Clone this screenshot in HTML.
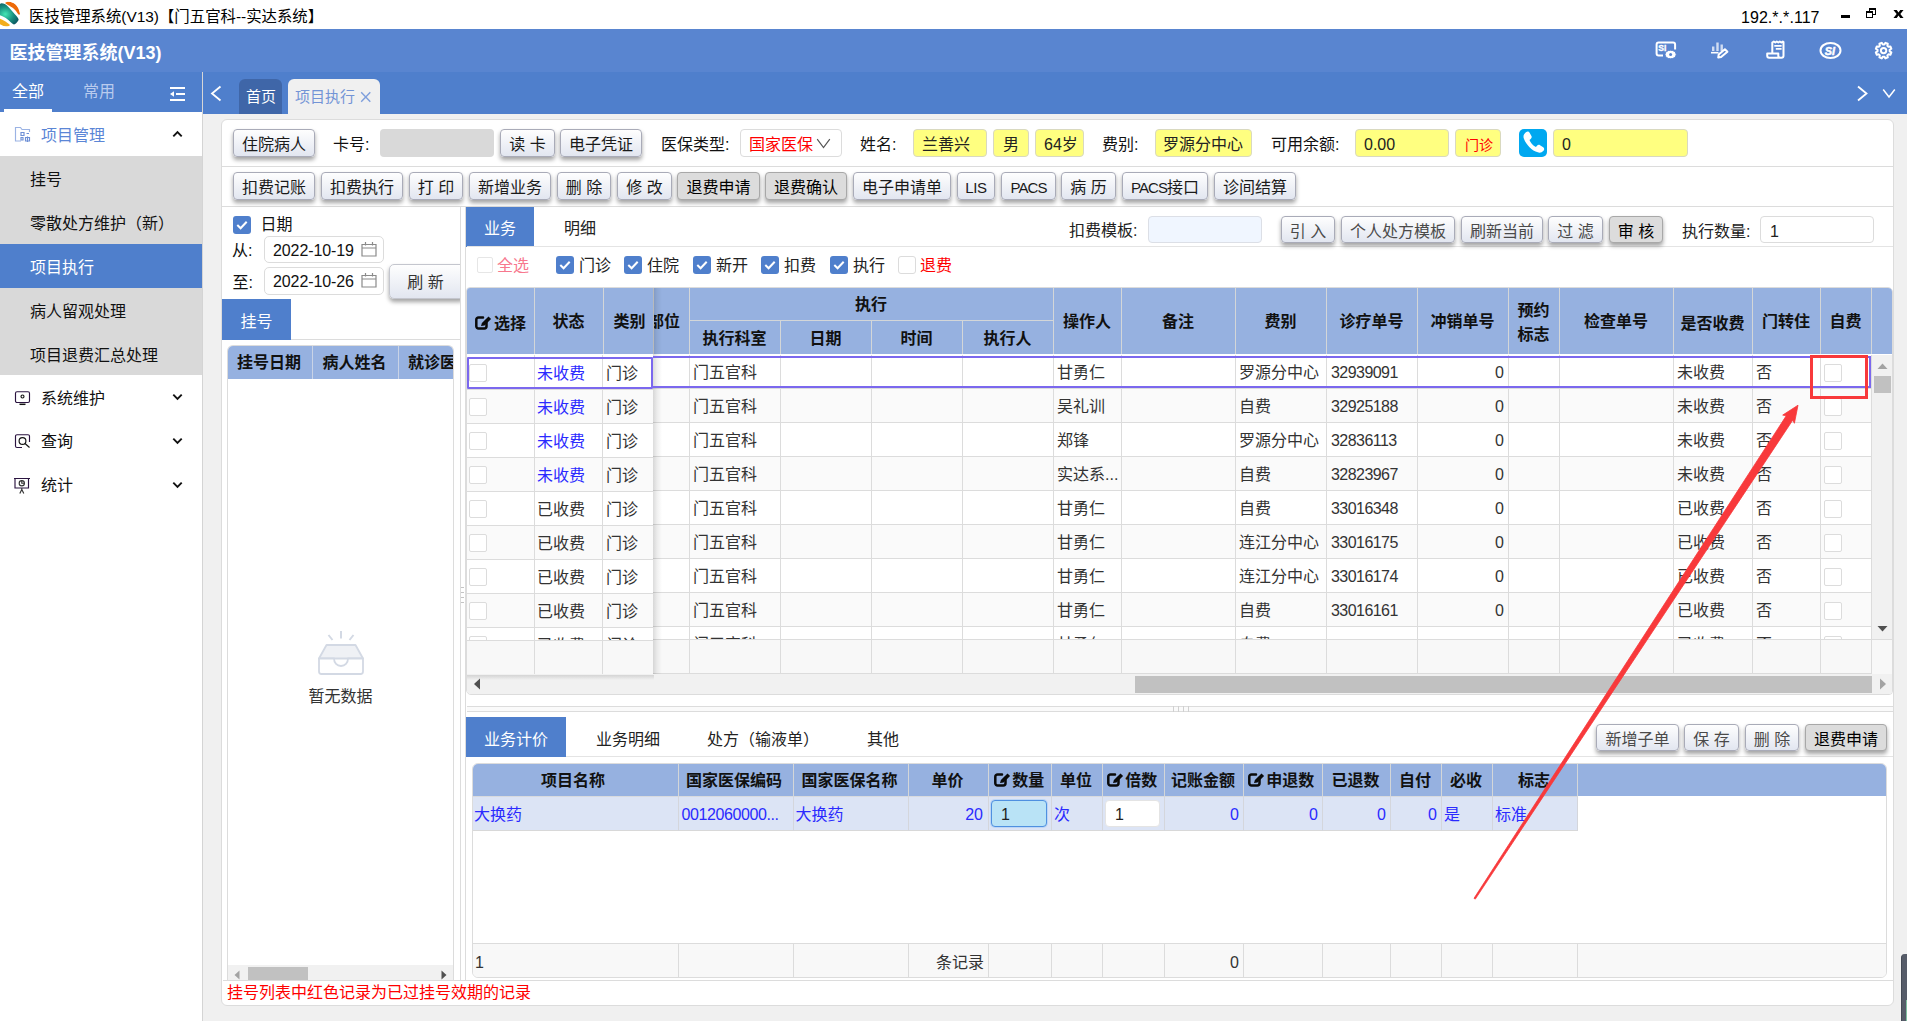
<!DOCTYPE html><html lang="zh-CN"><head><meta charset="utf-8"><title>医技管理系统(V13)</title><style>
*{box-sizing:border-box;margin:0;padding:0}
html,body{width:1907px;height:1021px;overflow:hidden;background:#f0f0f0}
body{position:relative;font-family:"Liberation Sans","Noto Sans CJK SC",sans-serif;font-size:16px;color:#222;-webkit-font-smoothing:antialiased}
div,svg,span.a{position:absolute}
.btn{height:27px;border:1px solid #a9abb8;border-radius:4px;background:linear-gradient(#fefefe,#e2e6f0);box-shadow:0 3px 4px rgba(0,0,0,.36);text-align:center;line-height:27px;color:#1a1a1a;white-space:nowrap}
.btn.g{color:#4a4a4a}
.btn.dis{background:#dcdcdc;border-color:#a8a8a8;color:#000}
.y{height:28px;border:1px solid #d9d9c0;border-radius:4px;background:#ffff80;line-height:29.500px;color:#222;white-space:nowrap}
.cb{width:18px;height:18px;border-radius:3px;background:#4F7FCC}
.cbu{width:18px;height:18px;border-radius:3px;background:#fff;border:1px solid #dcdcdc}
.hl{height:1px;background:#dcdcdc}
.vl{width:1px;background:#dcdcdc}
.th{font-weight:bold;color:#111;text-align:center;white-space:nowrap}
.c{white-space:nowrap;overflow:hidden;color:#333}
.bl{color:#2a2aff}
</style></head><body>
<div style="left:0px;top:0px;width:1907px;height:29px;background:#fff"></div>
<svg style="left:0;top:0" width="24" height="29" viewBox="0 0 24 29">
<defs><radialGradient id="lg" cx="0.45" cy="0.5" r="0.6"><stop offset="0" stop-color="#45e6b4"/><stop offset="0.55" stop-color="#189080"/><stop offset="1" stop-color="#0b5560"/></radialGradient>
<clipPath id="lc"><circle cx="7.5" cy="14" r="12.6"/></clipPath></defs>
<g clip-path="url(#lc)">
<rect x="-6" y="0" width="30" height="29" fill="#fff"/>
<path d="M-6 8 C2 -2 8 6 12 11 C16 16 20 18 19 24 C14 28 10 20 4 17 C0 15 -4 14 -6 12Z" fill="url(#lg)"/>
<path d="M5 3 C9 0 18 2 20 14 C19 16 18 14 16 11 C13 7 9 6 5 3Z" fill="#ee6a08"/>
<path d="M-6 17 C0 18 6 21 10 25 C8 28 0 27 -6 22Z" fill="#f2ad1c"/>
</g></svg>
<div style="left:29px;top:5px;height:24px;line-height:24px;white-space:nowrap;font-size:15.400px;color:#000">医技管理系统(V13)【门五官科--实达系统】</div>
<div style="left:1741px;top:5.5px;height:24px;line-height:24px;white-space:nowrap;color:#000;letter-spacing:0.05px">192.*.*.117</div>
<div style="left:1841px;top:15px;width:9px;height:3px;background:#000"></div>
<div style="left:1869px;top:8px;width:7px;height:7px;border:1px solid #000;border-top-width:2px;background:#fff"></div>
<div style="left:1866px;top:11px;width:7px;height:7px;border:1px solid #000;border-top-width:2px;background:#fff"></div>
<svg style="left:1893px;top:10px" width="11" height="8" viewBox="0 0 10.1 8"><path d="M0 0H3.300L5.050 2.500L6.800 0H10.100L6.900 4L10.100 8H6.800L5.050 5.500L3.300 8H0L3.200 4Z" fill="#000"/></svg>
<div style="left:0px;top:29px;width:1907px;height:43px;background:#5985D0"></div>
<div style="left:9.5px;top:39.8px;height:26px;line-height:26px;white-space:nowrap;font-size:18px;font-weight:bold;color:#fff">医技管理系统(V13)</div>
<svg style="left:1640px;top:34px" width="267" height="34" viewBox="1640 34 267 34">
<path d="M1663 55.400H1658.600a2 2 0 0 1-2-2V44.500a2 2 0 0 1 2-2H1673.100a2 2 0 0 1 2 2V49.500" stroke="#fff" fill="none" stroke-width="2" stroke-linejoin="round"/>
<text x="1658.200" y="51.300" font-size="8.600" font-weight="bold" stroke="#fff" stroke-width="0.300" fill="#fff" font-family='"Liberation Sans","Noto Sans CJK SC",sans-serif'>SI</text>
<ellipse cx="1670.600" cy="54.500" rx="5.600" ry="4.300" fill="#fff" stroke="#5985D0" stroke-width="1"/>
<circle cx="1670.600" cy="54.600" r="1.500" fill="#5985D0"/>
<path d="M1713.200 46.500v4.500M1717.500 42.500v8.500M1721.700 44.500v6.500" stroke="#fff" stroke-width="2.400" fill="none" opacity=".72"/>
<path d="M1711 52.700h7.500" stroke="#fff" stroke-width="1.600" fill="none"/>
<path d="M1724.900 49.200l2.500 2.500-6.300 5.300-2.900.600.500-3z" stroke="#fff" fill="none" stroke-width="2" stroke-linejoin="round" stroke-width="1.800"/>
<path d="M1772.300 53.200V42.500l1.500-1 1.500 1 1.500-1 1.500 1 1.500-1 1.500 1 1.500-1 .700.500V55.800a2 2 0 0 1-2 2H1769.200a2 2 0 0 1-2-2V53.500H1778.300V55.800a2 2 0 0 0 2 2" stroke="#fff" fill="none" stroke-width="2" stroke-linejoin="round"/>
<path d="M1774.300 45.800h7.300M1775.800 48.800h5.800" stroke="#fff" stroke-width="1.800" fill="none"/>
<ellipse cx="1830.500" cy="50.500" rx="10" ry="7.600" stroke="#fff" fill="none" stroke-width="2" stroke-linejoin="round"/>
<text x="1824.800" y="54.700" font-size="10.800" font-weight="bold" font-style="italic" stroke="#fff" stroke-width="0.500" fill="#fff" font-family='"Liberation Sans","Noto Sans CJK SC",sans-serif'>SI</text>
<path d="M1889.65 51.35 L1891.38 52.44 L1890.41 54.80 L1888.41 54.35 L1887.35 55.41 L1887.80 57.41 L1885.44 58.38 L1884.35 56.65 L1882.85 56.65 L1881.76 58.38 L1879.40 57.41 L1879.85 55.41 L1878.79 54.35 L1876.79 54.80 L1875.82 52.44 L1877.55 51.35 L1877.55 49.85 L1875.82 48.76 L1876.79 46.40 L1878.79 46.85 L1879.85 45.79 L1879.40 43.79 L1881.76 42.82 L1882.85 44.55 L1884.35 44.55 L1885.44 42.82 L1887.80 43.79 L1887.35 45.79 L1888.41 46.85 L1890.41 46.40 L1891.38 48.76 L1889.65 49.85Z" stroke="#fff" fill="none" stroke-width="2" stroke-linejoin="round"/><circle cx="1883.600" cy="50.600" r="2.700" stroke="#fff" fill="none" stroke-width="2" stroke-linejoin="round"/>
</svg>
<div style="left:0px;top:72px;width:203px;height:40px;background:#4F7FCC"></div>
<div style="left:203px;top:72px;width:1704px;height:42px;background:#4F7FCC"></div>
<div style="left:202px;top:72px;width:1px;height:949px;background:#d4d4d4"></div>
<div style="left:202px;top:72px;width:1px;height:42px;background:#d6d6d6"></div>
<div style="left:12px;top:79.7px;height:24px;line-height:24px;white-space:nowrap;color:#fff">全部</div>
<div style="left:83px;top:79.7px;height:24px;line-height:24px;white-space:nowrap;color:#b9cbee">常用</div>
<div style="left:4px;top:109px;width:48px;height:3px;background:#fff"></div>
<svg style="left:169px;top:86px" width="17" height="16" viewBox="0 0 17 16"><path d="M1 2h15M7 8h9M1 14h15" stroke="#fff" stroke-width="1.800" fill="none"/><path d="M1 8l4-2.800v5.600z" fill="#fff"/></svg>
<svg style="left:209px;top:84.500px" width="13" height="17" viewBox="0 0 13 17"><path d="M11.500 1.500L3 8.500L11.500 15.500" stroke="#fff" stroke-width="1.800" fill="none"/></svg>
<div style="left:239px;top:79px;width:43px;height:35px;background:#3f66a8;border-radius:6px 6px 0 0"></div>
<div style="left:246px;top:85px;height:24px;line-height:24px;white-space:nowrap;color:#fff;font-size:15px">首页</div>
<div style="left:288px;top:79px;width:92px;height:35px;background:#f0f0f0;border-radius:6px 6px 0 0"></div>
<div style="left:295px;top:85px;height:24px;line-height:24px;white-space:nowrap;color:#7394d6;font-size:15px">项目执行</div>
<svg style="left:360px;top:91px" width="12" height="12" viewBox="0 0 12 12"><path d="M1.200 1.200L10.300 10.800M10.300 1.200L1.200 10.800" stroke="#7f9fdc" stroke-width="1.400" fill="none"/></svg>
<svg style="left:1856px;top:84.500px" width="13" height="17" viewBox="0 0 13 17"><path d="M2 1.500L10.500 8.500L2 15.500" stroke="#fff" stroke-width="1.800" fill="none"/></svg>
<svg style="left:1882px;top:88px" width="14" height="11" viewBox="0 0 14 11"><path d="M1.200 1.500L7 9L12.800 1.500" stroke="#fff" stroke-width="1.500" fill="none"/></svg>
<div style="left:0px;top:112px;width:202px;height:909px;background:#fff"></div>
<div style="left:0px;top:156px;width:202px;height:219px;background:#d9d9d9"></div>
<div style="left:0px;top:244px;width:202px;height:44px;background:#4F7FCC"></div>
<svg style="left:14px;top:126px" width="18" height="17" viewBox="0 0 18 17"><path d="M15.500 6V3.500H8L6.500 1.500H1.500V15H7" stroke="#9bb3e4" stroke-width="1.150" fill="none"/><path d="M7 6.500h3v3H7zM12.500 7.500h2.500M7 11.500h2v2.500H7zM11.500 11.500h4v3.500h-4zM13.500 10.500v5.500" stroke="#6e90d6" stroke-width="1.150" fill="none"/></svg>
<div style="left:41px;top:124px;height:24px;line-height:24px;white-space:nowrap;color:#5b86d6">项目管理</div>
<svg style="left:172px;top:130px" width="11" height="8" viewBox="0 0 11 8"><path d="M1.300 6.300L5.500 2L9.700 6.300" stroke="#111" stroke-width="1.900" fill="none"/></svg>
<div style="left:30px;top:168px;height:24px;line-height:24px;white-space:nowrap;color:#111">挂号</div>
<div style="left:30px;top:212px;height:24px;line-height:24px;white-space:nowrap;color:#111">零散处方维护（新）</div>
<div style="left:30px;top:256px;height:24px;line-height:24px;white-space:nowrap;color:#fff">项目执行</div>
<div style="left:30px;top:300px;height:24px;line-height:24px;white-space:nowrap;color:#111">病人留观处理</div>
<div style="left:30px;top:343.5px;height:24px;line-height:24px;white-space:nowrap;color:#111">项目退费汇总处理</div>
<svg style="left:14px;top:390px" width="18" height="17" viewBox="0 0 18 17"><rect x="1.500" y="1.700" width="14" height="10.800" rx="1.500" stroke="#2b1440" stroke-width="1.150" fill="none"/><circle cx="8.500" cy="6.500" r="1.500" stroke="#111" stroke-width="1.150" fill="none"/><path d="M5.500 14.300h6" stroke="#111" stroke-width="1.500"/></svg>
<div style="left:41px;top:387px;height:24px;line-height:24px;white-space:nowrap;color:#111">系统维护</div>
<svg style="left:14px;top:433px" width="18" height="17" viewBox="0 0 18 17"><path d="M15.500 9V3.200a1.500 1.500 0 0 0-1.500-1.500H3a1.500 1.500 0 0 0-1.500 1.500V13a1.500 1.500 0 0 0 1.500 1.500h5" stroke="#2b1440" stroke-width="1.150" fill="none"/><circle cx="8.500" cy="8" r="3.400" stroke="#111" stroke-width="1.150" fill="none"/><path d="M11 10.500l4.500 4" stroke="#111" stroke-width="1.150" fill="none"/></svg>
<div style="left:41px;top:429.5px;height:24px;line-height:24px;white-space:nowrap;color:#111">查询</div>
<svg style="left:13px;top:477px" width="19" height="18" viewBox="0 0 19 18"><path d="M1 1.500h16M2 1.500v9.500h13.500V1.500" stroke="#2b1440" stroke-width="1.150" fill="none"/><circle cx="8.800" cy="6.200" r="2.600" stroke="#333" stroke-width="1.150" fill="none"/><path d="M8.800 3.600v2.600h2.400M8.800 11v2M6.800 16.500l2-4 2 4" stroke="#333" stroke-width="1.150" fill="none"/></svg>
<div style="left:41px;top:473.5px;height:24px;line-height:24px;white-space:nowrap;color:#111">统计</div>
<svg style="left:172px;top:393px" width="11" height="8" viewBox="0 0 11 8"><path d="M1.300 1.700L5.500 6L9.700 1.700" stroke="#111" stroke-width="1.900" fill="none"/></svg>
<svg style="left:172px;top:437px" width="11" height="8" viewBox="0 0 11 8"><path d="M1.300 1.700L5.500 6L9.700 1.700" stroke="#111" stroke-width="1.900" fill="none"/></svg>
<svg style="left:172px;top:481px" width="11" height="8" viewBox="0 0 11 8"><path d="M1.300 1.700L5.500 6L9.700 1.700" stroke="#111" stroke-width="1.900" fill="none"/></svg>
<div style="left:221px;top:119px;width:1673px;height:887px;background:#fff;border:1px solid #dcdcdc;border-radius:6px"></div>
<div class="hl" style="left:222px;top:166px;width:1671px;height:1px;"></div>
<div class="hl" style="left:222px;top:206px;width:1671px;height:1px;"></div>
<div class="btn " style="left:233px;top:129px;width:82px;height:28px;line-height:29.4px">住院病人</div>
<div style="left:333px;top:132.5px;height:24px;line-height:24px;white-space:nowrap;color:#111">卡号:</div>
<div style="left:380px;top:129px;width:114px;height:28px;background:#d9d9d9;border-radius:4px"></div>
<div class="btn " style="left:500px;top:129px;width:55px;height:28px;line-height:29.4px">读 卡</div>
<div class="btn " style="left:560px;top:129px;width:82px;height:28px;line-height:29.4px">电子凭证</div>
<div style="left:661px;top:132.5px;height:24px;line-height:24px;white-space:nowrap;color:#111">医保类型:</div>
<div style="left:740px;top:129px;width:102px;height:28px;background:#fff;border:1px solid #dcdcdc;border-radius:4px"></div>
<div style="left:749px;top:132.5px;height:24px;line-height:24px;white-space:nowrap;color:#ff0000">国家医保</div>
<svg style="left:816px;top:138px" width="15" height="11" viewBox="0 0 15 11"><path d="M1.200 1.200L7.500 9.500L13.800 1.200" stroke="#555" stroke-width="1.200" fill="none"/></svg>
<div style="left:860px;top:132.5px;height:24px;line-height:24px;white-space:nowrap;color:#111">姓名:</div>
<div class="y" style="left:913px;top:129px;width:74px;padding-left:8px;color:#222">兰善兴</div>
<div class="y" style="left:993px;top:129px;width:36px;padding-left:9px;color:#222">男</div>
<div class="y" style="left:1035px;top:129px;width:49px;padding-left:8px;color:#222">64岁</div>
<div style="left:1102px;top:132.5px;height:24px;line-height:24px;white-space:nowrap;color:#111">费别:</div>
<div class="y" style="left:1155px;top:129px;width:97px;padding-left:7px;color:#222">罗源分中心</div>
<div style="left:1271px;top:132.5px;height:24px;line-height:24px;white-space:nowrap;color:#111">可用余额:</div>
<div class="y" style="left:1355px;top:129px;width:94px;padding-left:8px;color:#222">0.00</div>
<div class="y" style="left:1455px;top:129px;width:46px;padding-left:9px;color:#ff0000"><span style="font-size:14px">门诊</span></div>
<div style="left:1519px;top:129px;width:28px;height:28px;background:#00a8f0;border-radius:5px"></div>
<svg style="left:1516px;top:126px" width="34" height="34" viewBox="0 0 28 28"><path d="M8.200 5.200c1.200-1 2.400-.8 3 .3l1.500 2.700c.5 1 .2 1.800-.6 2.500l-1 .8c.9 2.300 2.800 4.500 5.300 5.800l.9-1c.7-.8 1.600-1 2.500-.5l2.600 1.600c1 .7 1.100 1.900.2 2.900-1.200 1.400-2.800 2-4.600 1.400C12.800 20 8 15 6.300 9.800 5.800 8 6.700 6.300 8.200 5.200z" fill="#fff"/></svg>
<div class="y" style="left:1553px;top:129px;width:135px;padding-left:8px;color:#222">0</div>
<div class="btn " style="left:233px;top:172px;width:82px;height:28px;line-height:29.4px">扣费记账</div>
<div class="btn " style="left:321px;top:172px;width:82px;height:28px;line-height:29.4px">扣费执行</div>
<div class="btn " style="left:409px;top:172px;width:54px;height:28px;line-height:29.4px">打 印</div>
<div class="btn " style="left:469px;top:172px;width:82px;height:28px;line-height:29.4px">新增业务</div>
<div class="btn " style="left:557px;top:172px;width:54px;height:28px;line-height:29.4px">删 除</div>
<div class="btn " style="left:617px;top:172px;width:55px;height:28px;line-height:29.4px">修 改</div>
<div class="btn dis" style="left:677px;top:172px;width:83px;height:28px;line-height:29.4px">退费申请</div>
<div class="btn dis" style="left:765px;top:172px;width:82px;height:28px;line-height:29.4px">退费确认</div>
<div class="btn " style="left:853px;top:172px;width:98px;height:28px;line-height:29.4px">电子申请单</div>
<div class="btn " style="left:957px;top:172px;width:38px;height:28px;line-height:29.4px"><span style="font-size:15px;letter-spacing:-0.300px">LIS</span></div>
<div class="btn " style="left:1001px;top:172px;width:55px;height:28px;line-height:29.4px"><span style="font-size:15px;letter-spacing:-0.900px">PACS</span></div>
<div class="btn " style="left:1061px;top:172px;width:55px;height:28px;line-height:29.4px">病 历</div>
<div class="btn " style="left:1122px;top:172px;width:86px;height:28px;line-height:29.4px"><span style="font-size:15px;letter-spacing:-0.900px">PACS</span>接口</div>
<div class="btn " style="left:1214px;top:172px;width:82px;height:28px;line-height:29.4px">诊间结算</div>
<div class="vl" style="left:460px;top:207px;width:1px;height:774px;"></div>
<div class="vl" style="left:465px;top:207px;width:1px;height:774px;"></div>
<div class="cb" style="left:233px;top:216px"><svg style="left:3px;top:4px" width="12" height="10" viewBox="0 0 12 10"><path d="M1.300 5L4.600 8.200L10.700 1.700" stroke="#fff" stroke-width="2" fill="none"/></svg></div>
<div style="left:260.6px;top:213px;height:24px;line-height:24px;white-space:nowrap;color:#111">日期</div>
<div style="left:232px;top:238.5px;height:24px;line-height:24px;white-space:nowrap;color:#111">从:</div>
<div style="left:232.5px;top:271px;height:24px;line-height:24px;white-space:nowrap;color:#111">至:</div>
<div style="left:264px;top:236px;width:120px;height:27px;background:#fff;border:1px solid #dcdcdc;border-radius:5px"></div>
<div style="left:273px;top:238.8px;height:24px;line-height:24px;white-space:nowrap;color:#111;letter-spacing:-0.1px">2022-10-19</div>
<svg style="left:361px;top:241px" width="16" height="16" viewBox="0 0 16 16"><path d="M1 3.500h14v11.500H1zM1 7h14M4.500 1v3.500M11.500 1v3.500" stroke="#8a8a8a" stroke-width="1.200" fill="none"/></svg>
<div style="left:264px;top:267px;width:120px;height:28px;background:#fff;border:1px solid #dcdcdc;border-radius:5px"></div>
<div style="left:273px;top:269.8px;height:24px;line-height:24px;white-space:nowrap;color:#111;letter-spacing:-0.1px">2022-10-26</div>
<svg style="left:361px;top:272px" width="16" height="16" viewBox="0 0 16 16"><path d="M1 3.500h14v11.500H1zM1 7h14M4.500 1v3.500M11.500 1v3.500" stroke="#8a8a8a" stroke-width="1.200" fill="none"/></svg>
<div class="btn" style="left:389px;top:264px;width:76px;height:35px;line-height:35.500px;border-radius:5px;clip-path:inset(-2px 5px -12px -8px);padding-right:3px;border-color:#c4c6ce;color:#333">刷 新</div>
<div style="left:222px;top:299px;width:69px;height:41px;background:#4F7FCC"></div>
<div style="left:222px;top:310px;height:24px;line-height:24px;white-space:nowrap;width:69px;text-align:center;color:#fff">挂号</div>
<div class="hl" style="left:291px;top:339px;width:169px;height:1px;"></div>
<div style="left:227px;top:345px;width:227px;height:636px;background:#fff;border:1px solid #dcdcdc;border-radius:6px 6px 0 0;border-bottom:0"></div>
<div style="left:228px;top:346px;width:225px;height:33px;background:#96B1E0;border-radius:5px 5px 0 0;overflow:hidden"><div class="th" style="left:-1px;top:4.5px;height:24px;line-height:24px;white-space:nowrap;width:84px;text-align:center;">挂号日期</div><div style="left:84px;top:0px;width:1px;height:33px;background:#c9d3e6"></div><div class="th" style="left:84px;top:4.5px;height:24px;line-height:24px;white-space:nowrap;width:85px;text-align:center;">病人姓名</div><div style="left:170px;top:0px;width:1px;height:33px;background:#c9d3e6"></div><div class="th" style="left:180px;top:4.5px;height:24px;line-height:24px;white-space:nowrap;">就诊医生</div></div>
<svg style="left:312px;top:626px" width="58" height="52" viewBox="0 0 58 52"><path d="M29 5v7.500M16.500 9l4 5M41.500 9l-4 5" stroke="#d3d9e4" stroke-width="2" fill="none" stroke-linecap="butt"/><path d="M7 32.500l7.500-13.500h29L51 32.500z" fill="#eff1f5" stroke="#d3d9e4" stroke-width="1.800" stroke-linejoin="round"/><path d="M7 32.500h15c0 4.500 3 7.500 7 7.500s7-3 7-7.500H51v13a2.500 2.500 0 0 1-2.500 2.500h-39A2.500 2.500 0 0 1 7 45.500z" fill="#fff" stroke="#d3d9e4" stroke-width="1.800" stroke-linejoin="round"/></svg>
<div style="left:228px;top:684.5px;height:24px;line-height:24px;white-space:nowrap;width:225px;text-align:center;color:#333">暂无数据</div>
<div style="left:228px;top:965px;width:225px;height:15px;background:#f1f1f1"></div>
<div style="left:248px;top:967px;width:60px;height:13px;background:#c1c1c1"></div>
<svg style="left:233px;top:970px" width="8" height="10" viewBox="0 0 8 10"><path d="M6.500 0.500v9L1.500 5z" fill="#a3a3a3"/></svg>
<svg style="left:440px;top:970px" width="8" height="10" viewBox="0 0 8 10"><path d="M1.500 0.500v9L6.500 5z" fill="#505050"/></svg>
<div class="hl" style="left:223px;top:980px;width:1670px;height:1px;"></div>
<div style="left:227px;top:981.3px;height:24px;line-height:24px;white-space:nowrap;color:#ff0000">挂号列表中红色记录为已过挂号效期的记录</div>
<div style="left:466px;top:207px;width:68px;height:40px;background:#4F7FCC"></div>
<div style="left:466px;top:216.5px;height:24px;line-height:24px;white-space:nowrap;width:68px;text-align:center;color:#fff">业务</div>
<div style="left:564px;top:217px;height:24px;line-height:24px;white-space:nowrap;color:#222">明细</div>
<div style="left:467px;top:246px;width:1426px;height:1px;background:#e4e4e4"></div>
<div style="left:1069px;top:218.5px;height:24px;line-height:24px;white-space:nowrap;color:#222">扣费模板:</div>
<div style="left:1148px;top:216px;width:114px;height:27px;background:#f0f6ff;border:1px solid #dcdfe6;border-radius:4px"></div>
<div class="btn g" style="left:1281px;top:216px;width:54px;height:27px;line-height:29.4px">引 入</div>
<div class="btn g" style="left:1341px;top:216px;width:114px;height:27px;line-height:29.4px">个人处方模板</div>
<div class="btn g" style="left:1461px;top:216px;width:82px;height:27px;line-height:29.4px">刷新当前</div>
<div class="btn g" style="left:1548px;top:216px;width:55px;height:27px;line-height:29.4px">过 滤</div>
<div class="btn dis" style="left:1609px;top:216px;width:54px;height:27px;line-height:29.4px">审 核</div>
<div style="left:1682px;top:219.5px;height:24px;line-height:24px;white-space:nowrap;color:#222">执行数量:</div>
<div style="left:1760px;top:216px;width:114px;height:27px;background:#fff;border:1px solid #dcdcdc;border-radius:4px"></div>
<div style="left:1770px;top:219.5px;height:24px;line-height:24px;white-space:nowrap;color:#222">1</div>
<div style="left:477px;top:257px;width:16px;height:16px;background:#fff;border:1px solid #e6e6e6;border-radius:2px"></div>
<div style="left:497px;top:253.8px;height:24px;line-height:24px;white-space:nowrap;color:#f7788e">全选</div>
<div class="cb" style="left:556px;top:256px"><svg style="left:3px;top:4px" width="12" height="10" viewBox="0 0 12 10"><path d="M1.300 5L4.600 8.200L10.700 1.700" stroke="#fff" stroke-width="2" fill="none"/></svg></div>
<div style="left:579px;top:253.8px;height:24px;line-height:24px;white-space:nowrap;color:#222">门诊</div>
<div class="cb" style="left:624px;top:256px"><svg style="left:3px;top:4px" width="12" height="10" viewBox="0 0 12 10"><path d="M1.300 5L4.600 8.200L10.700 1.700" stroke="#fff" stroke-width="2" fill="none"/></svg></div>
<div style="left:647px;top:253.8px;height:24px;line-height:24px;white-space:nowrap;color:#222">住院</div>
<div class="cb" style="left:693px;top:256px"><svg style="left:3px;top:4px" width="12" height="10" viewBox="0 0 12 10"><path d="M1.300 5L4.600 8.200L10.700 1.700" stroke="#fff" stroke-width="2" fill="none"/></svg></div>
<div style="left:716px;top:253.8px;height:24px;line-height:24px;white-space:nowrap;color:#222">新开</div>
<div class="cb" style="left:761px;top:256px"><svg style="left:3px;top:4px" width="12" height="10" viewBox="0 0 12 10"><path d="M1.300 5L4.600 8.200L10.700 1.700" stroke="#fff" stroke-width="2" fill="none"/></svg></div>
<div style="left:784px;top:253.8px;height:24px;line-height:24px;white-space:nowrap;color:#222">扣费</div>
<div class="cb" style="left:830px;top:256px"><svg style="left:3px;top:4px" width="12" height="10" viewBox="0 0 12 10"><path d="M1.300 5L4.600 8.200L10.700 1.700" stroke="#fff" stroke-width="2" fill="none"/></svg></div>
<div style="left:853px;top:253.8px;height:24px;line-height:24px;white-space:nowrap;color:#222">执行</div>
<div class="cbu" style="left:898px;top:256px;"></div>
<div style="left:920px;top:253.8px;height:24px;line-height:24px;white-space:nowrap;color:#ff0000">退费</div>
<div style="left:466px;top:287px;width:1427px;height:408px;background:#fff;border:1px solid #dcdcdc;border-radius:4px 5px 4px 5px"></div>
<div style="left:467px;top:288px;width:1425px;height:66px;background:#96B1E0;border-radius:3px 4px 0 0"></div>
<div style="left:467px;top:356px;width:186px;height:34px;background:#fff;border-bottom:1px solid #dcdcdc"></div>
<div style="left:467px;top:390px;width:186px;height:34px;background:#fafafa;border-bottom:1px solid #dcdcdc"></div>
<div style="left:467px;top:424px;width:186px;height:34px;background:#fff;border-bottom:1px solid #dcdcdc"></div>
<div style="left:467px;top:458px;width:186px;height:34px;background:#fafafa;border-bottom:1px solid #dcdcdc"></div>
<div style="left:467px;top:492px;width:186px;height:34px;background:#fff;border-bottom:1px solid #dcdcdc"></div>
<div style="left:467px;top:526px;width:186px;height:34px;background:#fafafa;border-bottom:1px solid #dcdcdc"></div>
<div style="left:467px;top:560px;width:186px;height:34px;background:#fff;border-bottom:1px solid #dcdcdc"></div>
<div style="left:467px;top:594px;width:186px;height:34px;background:#fafafa;border-bottom:1px solid #dcdcdc"></div>
<div style="left:467px;top:628px;width:186px;height:12px;background:#fff;"></div>
<div style="left:467px;top:640px;width:186px;height:35px;background:#f8f8f8;border-top:1px solid #dcdcdc;border-bottom:1px solid #dcdcdc"></div>
<div style="left:653px;top:355px;width:1219px;height:34px;background:#fff;border-bottom:1px solid #dcdcdc"></div>
<div style="left:653px;top:389px;width:1219px;height:34px;background:#fafafa;border-bottom:1px solid #dcdcdc"></div>
<div style="left:653px;top:423px;width:1219px;height:34px;background:#fff;border-bottom:1px solid #dcdcdc"></div>
<div style="left:653px;top:457px;width:1219px;height:34px;background:#fafafa;border-bottom:1px solid #dcdcdc"></div>
<div style="left:653px;top:491px;width:1219px;height:34px;background:#fff;border-bottom:1px solid #dcdcdc"></div>
<div style="left:653px;top:525px;width:1219px;height:34px;background:#fafafa;border-bottom:1px solid #dcdcdc"></div>
<div style="left:653px;top:559px;width:1219px;height:34px;background:#fff;border-bottom:1px solid #dcdcdc"></div>
<div style="left:653px;top:593px;width:1219px;height:34px;background:#fafafa;border-bottom:1px solid #dcdcdc"></div>
<div style="left:653px;top:627px;width:1219px;height:12px;background:#fff;"></div>
<div style="left:653px;top:639px;width:1219px;height:35px;background:#f8f8f8;border-top:1px solid #dcdcdc;border-bottom:1px solid #dcdcdc"></div>
<div style="left:534px;top:288px;width:1px;height:66px;background:#d3d6d8"></div>
<div style="left:603px;top:288px;width:1px;height:66px;background:#d3d6d8"></div>
<div style="left:653px;top:288px;width:1px;height:66px;background:#d3d6d8"></div>
<div style="left:689px;top:288px;width:1px;height:66px;background:#d3d6d8"></div>
<div style="left:780px;top:321px;width:1px;height:33px;background:#d3d6d8"></div>
<div style="left:871px;top:321px;width:1px;height:33px;background:#d3d6d8"></div>
<div style="left:962px;top:321px;width:1px;height:33px;background:#d3d6d8"></div>
<div style="left:1053px;top:288px;width:1px;height:66px;background:#d3d6d8"></div>
<div style="left:1121px;top:288px;width:1px;height:66px;background:#d3d6d8"></div>
<div style="left:1235px;top:288px;width:1px;height:66px;background:#d3d6d8"></div>
<div style="left:1326px;top:288px;width:1px;height:66px;background:#d3d6d8"></div>
<div style="left:1417px;top:288px;width:1px;height:66px;background:#d3d6d8"></div>
<div style="left:1508px;top:288px;width:1px;height:66px;background:#d3d6d8"></div>
<div style="left:1559px;top:288px;width:1px;height:66px;background:#d3d6d8"></div>
<div style="left:1673px;top:288px;width:1px;height:66px;background:#d3d6d8"></div>
<div style="left:1752px;top:288px;width:1px;height:66px;background:#d3d6d8"></div>
<div style="left:1820px;top:288px;width:1px;height:66px;background:#d3d6d8"></div>
<div style="left:1871px;top:288px;width:1px;height:66px;background:#d3d6d8"></div>
<div style="left:689px;top:320px;width:364px;height:1px;background:#d3d6d8"></div>
<div style="left:534px;top:355px;width:1px;height:319px;background:#dcdcdc"></div>
<div style="left:602px;top:355px;width:1px;height:319px;background:#dcdcdc"></div>
<div style="left:689px;top:355px;width:1px;height:319px;background:#dcdcdc"></div>
<div style="left:780px;top:355px;width:1px;height:319px;background:#dcdcdc"></div>
<div style="left:871px;top:355px;width:1px;height:319px;background:#dcdcdc"></div>
<div style="left:962px;top:355px;width:1px;height:319px;background:#dcdcdc"></div>
<div style="left:1053px;top:355px;width:1px;height:319px;background:#dcdcdc"></div>
<div style="left:1121px;top:355px;width:1px;height:319px;background:#dcdcdc"></div>
<div style="left:1235px;top:355px;width:1px;height:319px;background:#dcdcdc"></div>
<div style="left:1326px;top:355px;width:1px;height:319px;background:#dcdcdc"></div>
<div style="left:1417px;top:355px;width:1px;height:319px;background:#dcdcdc"></div>
<div style="left:1508px;top:355px;width:1px;height:319px;background:#dcdcdc"></div>
<div style="left:1559px;top:355px;width:1px;height:319px;background:#dcdcdc"></div>
<div style="left:1673px;top:355px;width:1px;height:319px;background:#dcdcdc"></div>
<div style="left:1752px;top:355px;width:1px;height:319px;background:#dcdcdc"></div>
<div style="left:1820px;top:355px;width:1px;height:319px;background:#dcdcdc"></div>
<div style="left:1871px;top:355px;width:1px;height:319px;background:#dcdcdc"></div>
<svg style="left:475px;top:314.5px" width="18" height="17" viewBox="0 0 18 17"><path d="M11.500 7.200V11.300a2.200 2.200 0 0 1-2.200 2.200H3.500a2.200 2.200 0 0 1-2.200-2.200V4.700a2.200 2.200 0 0 1 2.200-2.200H8" stroke="#0a0a0a" stroke-width="2.500" fill="none" stroke-linecap="round"/><path d="M6 11.100L6.900 7.900L13.500 1.400L16.100 4L9.500 10.400Z" fill="#0a0a0a"/></svg>
<div class="th" style="left:494px;top:312px;height:24px;line-height:24px;white-space:nowrap;">选择</div>
<div class="th" style="left:534px;top:309.5px;height:24px;line-height:24px;white-space:nowrap;width:69px;text-align:center;">状态</div>
<div class="th" style="left:604px;top:309.5px;height:24px;line-height:24px;white-space:nowrap;width:51px;text-align:center;">类别</div>
<div style="left:654px;top:288px;width:35px;height:66px;overflow:hidden"><div class="th" style="left:-6px;top:21.5px;height:24px;line-height:24px;white-space:nowrap;">部位</div></div>
<div class="th" style="left:689px;top:292.5px;height:24px;line-height:24px;white-space:nowrap;width:364px;text-align:center;">执行</div>
<div class="th" style="left:689px;top:326.5px;height:24px;line-height:24px;white-space:nowrap;width:91px;text-align:center;">执行科室</div>
<div class="th" style="left:780px;top:326.5px;height:24px;line-height:24px;white-space:nowrap;width:91px;text-align:center;">日期</div>
<div class="th" style="left:871px;top:326.5px;height:24px;line-height:24px;white-space:nowrap;width:91px;text-align:center;">时间</div>
<div class="th" style="left:962px;top:326.5px;height:24px;line-height:24px;white-space:nowrap;width:91px;text-align:center;">执行人</div>
<div class="th" style="left:1053px;top:309.5px;height:24px;line-height:24px;white-space:nowrap;width:68px;text-align:center;">操作人</div>
<div class="th" style="left:1121px;top:309.5px;height:24px;line-height:24px;white-space:nowrap;width:114px;text-align:center;">备注</div>
<div class="th" style="left:1235px;top:309.5px;height:24px;line-height:24px;white-space:nowrap;width:91px;text-align:center;">费别</div>
<div class="th" style="left:1326px;top:309.5px;height:24px;line-height:24px;white-space:nowrap;width:91px;text-align:center;">诊疗单号</div>
<div class="th" style="left:1417px;top:309.5px;height:24px;line-height:24px;white-space:nowrap;width:91px;text-align:center;">冲销单号</div>
<div class="th" style="left:1508px;top:299px;height:24px;line-height:24px;white-space:nowrap;width:51px;text-align:center;">预约</div>
<div class="th" style="left:1508px;top:323px;height:24px;line-height:24px;white-space:nowrap;width:51px;text-align:center;">标志</div>
<div class="th" style="left:1559px;top:309.5px;height:24px;line-height:24px;white-space:nowrap;width:114px;text-align:center;">检查单号</div>
<div class="th" style="left:1673px;top:311.5px;height:24px;line-height:24px;white-space:nowrap;width:79px;text-align:center;">是否收费</div>
<div class="th" style="left:1752px;top:309.5px;height:24px;line-height:24px;white-space:nowrap;width:68px;text-align:center;">门转住</div>
<div class="th" style="left:1820px;top:309.5px;height:24px;line-height:24px;white-space:nowrap;width:51px;text-align:center;">自费</div>
<div style="left:467px;top:356px;width:186px;height:284px;overflow:hidden"><div class="cbu" style="left:2px;top:8px;width:18px;height:18px;border-radius:2px"></div><div class="c bl" style="left:68px;top:6.1px;width:68px;height:24px;line-height:24px;padding:0 2px;">未收费</div><div class="c" style="left:137px;top:6.1px;width:49px;height:24px;line-height:24px;padding:0 2px;">门诊</div><div class="cbu" style="left:2px;top:42px;width:18px;height:18px;border-radius:2px"></div><div class="c bl" style="left:68px;top:40.1px;width:68px;height:24px;line-height:24px;padding:0 2px;">未收费</div><div class="c" style="left:137px;top:40.1px;width:49px;height:24px;line-height:24px;padding:0 2px;">门诊</div><div class="cbu" style="left:2px;top:76px;width:18px;height:18px;border-radius:2px"></div><div class="c bl" style="left:68px;top:74.1px;width:68px;height:24px;line-height:24px;padding:0 2px;">未收费</div><div class="c" style="left:137px;top:74.1px;width:49px;height:24px;line-height:24px;padding:0 2px;">门诊</div><div class="cbu" style="left:2px;top:110px;width:18px;height:18px;border-radius:2px"></div><div class="c bl" style="left:68px;top:108.1px;width:68px;height:24px;line-height:24px;padding:0 2px;">未收费</div><div class="c" style="left:137px;top:108.1px;width:49px;height:24px;line-height:24px;padding:0 2px;">门诊</div><div class="cbu" style="left:2px;top:144px;width:18px;height:18px;border-radius:2px"></div><div class="c" style="left:68px;top:142.1px;width:68px;height:24px;line-height:24px;padding:0 2px;">已收费</div><div class="c" style="left:137px;top:142.1px;width:49px;height:24px;line-height:24px;padding:0 2px;">门诊</div><div class="cbu" style="left:2px;top:178px;width:18px;height:18px;border-radius:2px"></div><div class="c" style="left:68px;top:176.1px;width:68px;height:24px;line-height:24px;padding:0 2px;">已收费</div><div class="c" style="left:137px;top:176.1px;width:49px;height:24px;line-height:24px;padding:0 2px;">门诊</div><div class="cbu" style="left:2px;top:212px;width:18px;height:18px;border-radius:2px"></div><div class="c" style="left:68px;top:210.1px;width:68px;height:24px;line-height:24px;padding:0 2px;">已收费</div><div class="c" style="left:137px;top:210.1px;width:49px;height:24px;line-height:24px;padding:0 2px;">门诊</div><div class="cbu" style="left:2px;top:246px;width:18px;height:18px;border-radius:2px"></div><div class="c" style="left:68px;top:244.1px;width:68px;height:24px;line-height:24px;padding:0 2px;">已收费</div><div class="c" style="left:137px;top:244.1px;width:49px;height:24px;line-height:24px;padding:0 2px;">门诊</div><div class="cbu" style="left:2px;top:280px;width:18px;height:18px;border-radius:2px"></div><div class="c" style="left:68px;top:278.1px;width:68px;height:24px;line-height:24px;padding:0 2px;">已收费</div><div class="c" style="left:137px;top:278.1px;width:49px;height:24px;line-height:24px;padding:0 2px;">门诊</div></div>
<div style="left:653px;top:355px;width:1219px;height:284px;overflow:hidden"><div class="c" style="left:37px;top:6.1px;width:90px;height:24px;line-height:24px;padding:0 3px;">门五官科</div><div class="c" style="left:401px;top:6.1px;width:67px;height:24px;line-height:24px;padding:0 3px;">甘勇仁</div><div class="c" style="left:583px;top:6.1px;width:90px;height:24px;line-height:24px;padding:0 3px;">罗源分中心</div><div class="c" style="left:674px;top:6.1px;width:90px;height:24px;line-height:24px;padding:0 4px;letter-spacing:-0.55px;">32939091</div><div class="c" style="left:765px;top:6.1px;width:90px;height:24px;line-height:24px;padding:0 4px;text-align:right;">0</div><div class="c" style="left:1021px;top:6.1px;width:78px;height:24px;line-height:24px;padding:0 3px;">未收费</div><div class="c" style="left:1100px;top:6.1px;width:67px;height:24px;line-height:24px;padding:0 3px;">否</div><div class="cbu" style="left:1171px;top:9px;width:18px;height:18px;border-radius:2px"></div><div class="c" style="left:37px;top:40.1px;width:90px;height:24px;line-height:24px;padding:0 3px;">门五官科</div><div class="c" style="left:401px;top:40.1px;width:67px;height:24px;line-height:24px;padding:0 3px;">吴礼训</div><div class="c" style="left:583px;top:40.1px;width:90px;height:24px;line-height:24px;padding:0 3px;">自费</div><div class="c" style="left:674px;top:40.1px;width:90px;height:24px;line-height:24px;padding:0 4px;letter-spacing:-0.55px;">32925188</div><div class="c" style="left:765px;top:40.1px;width:90px;height:24px;line-height:24px;padding:0 4px;text-align:right;">0</div><div class="c" style="left:1021px;top:40.1px;width:78px;height:24px;line-height:24px;padding:0 3px;">未收费</div><div class="c" style="left:1100px;top:40.1px;width:67px;height:24px;line-height:24px;padding:0 3px;">否</div><div class="cbu" style="left:1171px;top:43px;width:18px;height:18px;border-radius:2px"></div><div class="c" style="left:37px;top:74.1px;width:90px;height:24px;line-height:24px;padding:0 3px;">门五官科</div><div class="c" style="left:401px;top:74.1px;width:67px;height:24px;line-height:24px;padding:0 3px;">郑锋</div><div class="c" style="left:583px;top:74.1px;width:90px;height:24px;line-height:24px;padding:0 3px;">罗源分中心</div><div class="c" style="left:674px;top:74.1px;width:90px;height:24px;line-height:24px;padding:0 4px;letter-spacing:-0.55px;">32836113</div><div class="c" style="left:765px;top:74.1px;width:90px;height:24px;line-height:24px;padding:0 4px;text-align:right;">0</div><div class="c" style="left:1021px;top:74.1px;width:78px;height:24px;line-height:24px;padding:0 3px;">未收费</div><div class="c" style="left:1100px;top:74.1px;width:67px;height:24px;line-height:24px;padding:0 3px;">否</div><div class="cbu" style="left:1171px;top:77px;width:18px;height:18px;border-radius:2px"></div><div class="c" style="left:37px;top:108.1px;width:90px;height:24px;line-height:24px;padding:0 3px;">门五官科</div><div class="c" style="left:401px;top:108.1px;width:67px;height:24px;line-height:24px;padding:0 3px;">实达系...</div><div class="c" style="left:583px;top:108.1px;width:90px;height:24px;line-height:24px;padding:0 3px;">自费</div><div class="c" style="left:674px;top:108.1px;width:90px;height:24px;line-height:24px;padding:0 4px;letter-spacing:-0.55px;">32823967</div><div class="c" style="left:765px;top:108.1px;width:90px;height:24px;line-height:24px;padding:0 4px;text-align:right;">0</div><div class="c" style="left:1021px;top:108.1px;width:78px;height:24px;line-height:24px;padding:0 3px;">未收费</div><div class="c" style="left:1100px;top:108.1px;width:67px;height:24px;line-height:24px;padding:0 3px;">否</div><div class="cbu" style="left:1171px;top:111px;width:18px;height:18px;border-radius:2px"></div><div class="c" style="left:37px;top:142.1px;width:90px;height:24px;line-height:24px;padding:0 3px;">门五官科</div><div class="c" style="left:401px;top:142.1px;width:67px;height:24px;line-height:24px;padding:0 3px;">甘勇仁</div><div class="c" style="left:583px;top:142.1px;width:90px;height:24px;line-height:24px;padding:0 3px;">自费</div><div class="c" style="left:674px;top:142.1px;width:90px;height:24px;line-height:24px;padding:0 4px;letter-spacing:-0.55px;">33016348</div><div class="c" style="left:765px;top:142.1px;width:90px;height:24px;line-height:24px;padding:0 4px;text-align:right;">0</div><div class="c" style="left:1021px;top:142.1px;width:78px;height:24px;line-height:24px;padding:0 3px;">已收费</div><div class="c" style="left:1100px;top:142.1px;width:67px;height:24px;line-height:24px;padding:0 3px;">否</div><div class="cbu" style="left:1171px;top:145px;width:18px;height:18px;border-radius:2px"></div><div class="c" style="left:37px;top:176.1px;width:90px;height:24px;line-height:24px;padding:0 3px;">门五官科</div><div class="c" style="left:401px;top:176.1px;width:67px;height:24px;line-height:24px;padding:0 3px;">甘勇仁</div><div class="c" style="left:583px;top:176.1px;width:90px;height:24px;line-height:24px;padding:0 3px;">连江分中心</div><div class="c" style="left:674px;top:176.1px;width:90px;height:24px;line-height:24px;padding:0 4px;letter-spacing:-0.55px;">33016175</div><div class="c" style="left:765px;top:176.1px;width:90px;height:24px;line-height:24px;padding:0 4px;text-align:right;">0</div><div class="c" style="left:1021px;top:176.1px;width:78px;height:24px;line-height:24px;padding:0 3px;">已收费</div><div class="c" style="left:1100px;top:176.1px;width:67px;height:24px;line-height:24px;padding:0 3px;">否</div><div class="cbu" style="left:1171px;top:179px;width:18px;height:18px;border-radius:2px"></div><div class="c" style="left:37px;top:210.1px;width:90px;height:24px;line-height:24px;padding:0 3px;">门五官科</div><div class="c" style="left:401px;top:210.1px;width:67px;height:24px;line-height:24px;padding:0 3px;">甘勇仁</div><div class="c" style="left:583px;top:210.1px;width:90px;height:24px;line-height:24px;padding:0 3px;">连江分中心</div><div class="c" style="left:674px;top:210.1px;width:90px;height:24px;line-height:24px;padding:0 4px;letter-spacing:-0.55px;">33016174</div><div class="c" style="left:765px;top:210.1px;width:90px;height:24px;line-height:24px;padding:0 4px;text-align:right;">0</div><div class="c" style="left:1021px;top:210.1px;width:78px;height:24px;line-height:24px;padding:0 3px;">已收费</div><div class="c" style="left:1100px;top:210.1px;width:67px;height:24px;line-height:24px;padding:0 3px;">否</div><div class="cbu" style="left:1171px;top:213px;width:18px;height:18px;border-radius:2px"></div><div class="c" style="left:37px;top:244.1px;width:90px;height:24px;line-height:24px;padding:0 3px;">门五官科</div><div class="c" style="left:401px;top:244.1px;width:67px;height:24px;line-height:24px;padding:0 3px;">甘勇仁</div><div class="c" style="left:583px;top:244.1px;width:90px;height:24px;line-height:24px;padding:0 3px;">自费</div><div class="c" style="left:674px;top:244.1px;width:90px;height:24px;line-height:24px;padding:0 4px;letter-spacing:-0.55px;">33016161</div><div class="c" style="left:765px;top:244.1px;width:90px;height:24px;line-height:24px;padding:0 4px;text-align:right;">0</div><div class="c" style="left:1021px;top:244.1px;width:78px;height:24px;line-height:24px;padding:0 3px;">已收费</div><div class="c" style="left:1100px;top:244.1px;width:67px;height:24px;line-height:24px;padding:0 3px;">否</div><div class="cbu" style="left:1171px;top:247px;width:18px;height:18px;border-radius:2px"></div><div class="c" style="left:37px;top:278.1px;width:90px;height:24px;line-height:24px;padding:0 3px;">门五官科</div><div class="c" style="left:401px;top:278.1px;width:67px;height:24px;line-height:24px;padding:0 3px;">甘勇仁</div><div class="c" style="left:583px;top:278.1px;width:90px;height:24px;line-height:24px;padding:0 3px;">自费</div><div class="c" style="left:674px;top:278.1px;width:90px;height:24px;line-height:24px;padding:0 4px;letter-spacing:-0.55px;"></div><div class="c" style="left:765px;top:278.1px;width:90px;height:24px;line-height:24px;padding:0 4px;text-align:right;"></div><div class="c" style="left:1021px;top:278.1px;width:78px;height:24px;line-height:24px;padding:0 3px;">已收费</div><div class="c" style="left:1100px;top:278.1px;width:67px;height:24px;line-height:24px;padding:0 3px;">否</div><div class="cbu" style="left:1171px;top:281px;width:18px;height:18px;border-radius:2px"></div></div>
<div style="left:653px;top:288px;width:9px;height:386px;background:linear-gradient(90deg,rgba(0,0,0,.14),rgba(0,0,0,.06) 45%,rgba(0,0,0,0))"></div>
<div style="left:467px;top:357px;width:186px;height:32px;border:2px solid #7b68ee;border-radius:1px"></div>
<div style="left:653px;top:356px;width:1218px;height:32px;border:2px solid #7b68ee;border-left:0;"></div>
<div style="left:1872px;top:355px;width:20px;height:284px;background:#f1f1f1"></div>
<div style="left:1874px;top:376px;width:17px;height:17px;background:#c1c1c1"></div>
<svg style="left:1877px;top:362px" width="11" height="8" viewBox="0 0 11 8"><path d="M0.500 7L5.500 1.500L10.500 7z" fill="#a3a3a3"/></svg>
<svg style="left:1877px;top:625px" width="11" height="8" viewBox="0 0 11 8"><path d="M0.500 1L5.500 6.500L10.500 1z" fill="#505050"/></svg>
<div style="left:1872px;top:639px;width:20px;height:35px;background:#f8f8f8;border-top:1px solid #dcdcdc"></div>
<div style="left:467px;top:674px;width:1425px;height:20px;background:#f1f1f1;border-radius:0 0 3px 4px"></div>
<div style="left:1135px;top:676px;width:737px;height:17px;background:#c1c1c1"></div>
<svg style="left:473px;top:678px" width="8" height="12" viewBox="0 0 8 12"><path d="M7 0.500v11L1 6z" fill="#505050"/></svg>
<svg style="left:1879px;top:678px" width="8" height="12" viewBox="0 0 8 12"><path d="M1 0.500v11L7 6z" fill="#a3a3a3"/></svg>
<div style="left:467px;top:675px;width:187px;height:5px;background:linear-gradient(180deg,rgba(0,0,0,.12),rgba(0,0,0,0))"></div>
<div style="left:467px;top:706px;width:1426px;height:6px;background:#fafafa;border-top:1px solid #dcdcdc;border-bottom:1px solid #dcdcdc"></div>
<div style="left:1173px;top:706px;width:1px;height:6px;background:#d0d0d0"></div>
<div style="left:1178px;top:706px;width:1px;height:6px;background:#d0d0d0"></div>
<div style="left:1183px;top:706px;width:1px;height:6px;background:#d0d0d0"></div>
<div style="left:1188px;top:706px;width:1px;height:6px;background:#d0d0d0"></div>
<div style="left:461px;top:587px;width:3px;height:1px;background:#c4c4c4"></div>
<div style="left:461px;top:592px;width:3px;height:1px;background:#c4c4c4"></div>
<div style="left:461px;top:597px;width:3px;height:1px;background:#c4c4c4"></div>
<div style="left:461px;top:602px;width:3px;height:1px;background:#c4c4c4"></div>
<div style="left:467px;top:756px;width:1426px;height:1px;background:#e4e4e4"></div>
<div style="left:466px;top:717px;width:100px;height:40px;background:#4F7FCC"></div>
<div style="left:466px;top:728px;height:24px;line-height:24px;white-space:nowrap;width:100px;text-align:center;color:#fff">业务计价</div>
<div style="left:596px;top:728px;height:24px;line-height:24px;white-space:nowrap;color:#222">业务明细</div>
<div style="left:707px;top:728px;height:24px;line-height:24px;white-space:nowrap;color:#222">处方（输液单）</div>
<div style="left:867px;top:728px;height:24px;line-height:24px;white-space:nowrap;color:#222">其他</div>
<div class="btn g" style="left:1596px;top:724px;width:83px;height:27px;line-height:29.4px">新增子单</div>
<div class="btn g" style="left:1684px;top:724px;width:55px;height:27px;line-height:29.4px">保 存</div>
<div class="btn g" style="left:1745px;top:724px;width:54px;height:27px;line-height:29.4px">删 除</div>
<div class="btn dis" style="left:1805px;top:724px;width:82px;height:27px;line-height:29.4px">退费申请</div>
<div style="left:472px;top:763px;width:1415px;height:215px;background:#fff;border:1px solid #dcdcdc;border-radius:6px"></div>
<div style="left:473px;top:764px;width:1413px;height:32px;background:#96B1E0;border-radius:5px 5px 0 0"></div>
<div style="left:473px;top:796px;width:1104px;height:35px;background:#dce4f5;border-top:1px solid #d8dade;border-bottom:1px solid #d8d8d8"></div>
<div style="left:473px;top:943px;width:1413px;height:34px;background:#f8f8f8;border-top:1px solid #dcdcdc;border-radius:0 0 5px 5px"></div>
<div style="left:678px;top:764px;width:1px;height:32px;background:#d3d6d8"></div>
<div style="left:678px;top:796px;width:1px;height:35px;background:#d4d6dc"></div>
<div style="left:678px;top:944px;width:1px;height:33px;background:#dcdcdc"></div>
<div style="left:793px;top:764px;width:1px;height:32px;background:#d3d6d8"></div>
<div style="left:793px;top:796px;width:1px;height:35px;background:#d4d6dc"></div>
<div style="left:793px;top:944px;width:1px;height:33px;background:#dcdcdc"></div>
<div style="left:908px;top:764px;width:1px;height:32px;background:#d3d6d8"></div>
<div style="left:908px;top:796px;width:1px;height:35px;background:#d4d6dc"></div>
<div style="left:908px;top:944px;width:1px;height:33px;background:#dcdcdc"></div>
<div style="left:988px;top:764px;width:1px;height:32px;background:#d3d6d8"></div>
<div style="left:988px;top:796px;width:1px;height:35px;background:#d4d6dc"></div>
<div style="left:988px;top:944px;width:1px;height:33px;background:#dcdcdc"></div>
<div style="left:1051px;top:764px;width:1px;height:32px;background:#d3d6d8"></div>
<div style="left:1051px;top:796px;width:1px;height:35px;background:#d4d6dc"></div>
<div style="left:1051px;top:944px;width:1px;height:33px;background:#dcdcdc"></div>
<div style="left:1102px;top:764px;width:1px;height:32px;background:#d3d6d8"></div>
<div style="left:1102px;top:796px;width:1px;height:35px;background:#d4d6dc"></div>
<div style="left:1102px;top:944px;width:1px;height:33px;background:#dcdcdc"></div>
<div style="left:1164px;top:764px;width:1px;height:32px;background:#d3d6d8"></div>
<div style="left:1164px;top:796px;width:1px;height:35px;background:#d4d6dc"></div>
<div style="left:1164px;top:944px;width:1px;height:33px;background:#dcdcdc"></div>
<div style="left:1243px;top:764px;width:1px;height:32px;background:#d3d6d8"></div>
<div style="left:1243px;top:796px;width:1px;height:35px;background:#d4d6dc"></div>
<div style="left:1243px;top:944px;width:1px;height:33px;background:#dcdcdc"></div>
<div style="left:1322px;top:764px;width:1px;height:32px;background:#d3d6d8"></div>
<div style="left:1322px;top:796px;width:1px;height:35px;background:#d4d6dc"></div>
<div style="left:1322px;top:944px;width:1px;height:33px;background:#dcdcdc"></div>
<div style="left:1390px;top:764px;width:1px;height:32px;background:#d3d6d8"></div>
<div style="left:1390px;top:796px;width:1px;height:35px;background:#d4d6dc"></div>
<div style="left:1390px;top:944px;width:1px;height:33px;background:#dcdcdc"></div>
<div style="left:1441px;top:764px;width:1px;height:32px;background:#d3d6d8"></div>
<div style="left:1441px;top:796px;width:1px;height:35px;background:#d4d6dc"></div>
<div style="left:1441px;top:944px;width:1px;height:33px;background:#dcdcdc"></div>
<div style="left:1492px;top:764px;width:1px;height:32px;background:#d3d6d8"></div>
<div style="left:1492px;top:796px;width:1px;height:35px;background:#d4d6dc"></div>
<div style="left:1492px;top:944px;width:1px;height:33px;background:#dcdcdc"></div>
<div style="left:1577px;top:764px;width:1px;height:32px;background:#d3d6d8"></div>
<div style="left:1577px;top:796px;width:1px;height:35px;background:#d4d6dc"></div>
<div style="left:1577px;top:944px;width:1px;height:33px;background:#dcdcdc"></div>
<div class="th" style="left:470.5px;top:768.5px;height:24px;line-height:24px;white-space:nowrap;width:205.0px;text-align:center;">项目名称</div>
<div class="th" style="left:676.5px;top:768.5px;height:24px;line-height:24px;white-space:nowrap;width:115.0px;text-align:center;">国家医保编码</div>
<div class="th" style="left:792px;top:768.5px;height:24px;line-height:24px;white-space:nowrap;width:115px;text-align:center;">国家医保名称</div>
<div class="th" style="left:907.5px;top:768.5px;height:24px;line-height:24px;white-space:nowrap;width:80.0px;text-align:center;">单价</div>
<svg style="left:994px;top:772px" width="18" height="17" viewBox="0 0 18 17"><path d="M11.500 7.200V11.300a2.200 2.200 0 0 1-2.200 2.200H3.500a2.200 2.200 0 0 1-2.200-2.200V4.700a2.200 2.200 0 0 1 2.200-2.200H8" stroke="#0a0a0a" stroke-width="2.500" fill="none" stroke-linecap="round"/><path d="M6 11.100L6.900 7.900L13.500 1.400L16.100 4L9.500 10.400Z" fill="#0a0a0a"/></svg>
<div class="th" style="left:1012.3px;top:768.5px;height:24px;line-height:24px;white-space:nowrap;">数量</div>
<div class="th" style="left:1050.5px;top:768.5px;height:24px;line-height:24px;white-space:nowrap;width:51.0px;text-align:center;">单位</div>
<svg style="left:1107px;top:772px" width="18" height="17" viewBox="0 0 18 17"><path d="M11.500 7.200V11.300a2.200 2.200 0 0 1-2.200 2.200H3.500a2.200 2.200 0 0 1-2.200-2.200V4.700a2.200 2.200 0 0 1 2.200-2.200H8" stroke="#0a0a0a" stroke-width="2.500" fill="none" stroke-linecap="round"/><path d="M6 11.100L6.900 7.900L13.500 1.400L16.100 4L9.500 10.400Z" fill="#0a0a0a"/></svg>
<div class="th" style="left:1125.3px;top:768.5px;height:24px;line-height:24px;white-space:nowrap;">倍数</div>
<div class="th" style="left:1163.5px;top:768.5px;height:24px;line-height:24px;white-space:nowrap;width:79.0px;text-align:center;">记账金额</div>
<svg style="left:1248px;top:772px" width="18" height="17" viewBox="0 0 18 17"><path d="M11.500 7.200V11.300a2.200 2.200 0 0 1-2.200 2.200H3.500a2.200 2.200 0 0 1-2.200-2.200V4.700a2.200 2.200 0 0 1 2.200-2.200H8" stroke="#0a0a0a" stroke-width="2.500" fill="none" stroke-linecap="round"/><path d="M6 11.100L6.900 7.900L13.500 1.400L16.100 4L9.500 10.400Z" fill="#0a0a0a"/></svg>
<div class="th" style="left:1266.3px;top:768.5px;height:24px;line-height:24px;white-space:nowrap;">申退数</div>
<div class="th" style="left:1321.5px;top:768.5px;height:24px;line-height:24px;white-space:nowrap;width:68.0px;text-align:center;">已退数</div>
<div class="th" style="left:1389.5px;top:768.5px;height:24px;line-height:24px;white-space:nowrap;width:51.0px;text-align:center;">自付</div>
<div class="th" style="left:1440.5px;top:768.5px;height:24px;line-height:24px;white-space:nowrap;width:51.0px;text-align:center;">必收</div>
<div class="th" style="left:1491.5px;top:768.5px;height:24px;line-height:24px;white-space:nowrap;width:85.0px;text-align:center;">标志</div>
<div class="c bl" style="left:473px;top:802.5px;width:205px;height:24px;line-height:24px;padding:0 1px;">大换药</div>
<div class="c bl" style="left:679px;top:802.5px;width:114px;height:24px;line-height:24px;padding:0 2.5px;letter-spacing:-0.4px;">0012060000...</div>
<div class="c bl" style="left:794px;top:802.5px;width:114px;height:24px;line-height:24px;padding:0 1.5px;">大换药</div>
<div class="c bl" style="left:909px;top:802.5px;width:79px;height:24px;line-height:24px;padding:0 5px;text-align:right;">20</div>
<div style="left:991px;top:800px;width:56px;height:27px;background:#b9e3f6;border:1px solid #4f90e0;border-radius:4px;box-shadow:0 0 0 1px #bcd6f6"></div>
<div style="left:1001px;top:803px;height:24px;line-height:24px;white-space:nowrap;color:#222">1</div>
<div class="c bl" style="left:1052px;top:802.5px;width:50px;height:24px;line-height:24px;padding:0 2px;">次</div>
<div style="left:1105px;top:800px;width:55px;height:27px;background:#fff;border:1px solid #e4e4e4;border-radius:4px"></div>
<div style="left:1115px;top:803px;height:24px;line-height:24px;white-space:nowrap;color:#222">1</div>
<div class="c bl" style="left:1165px;top:802.5px;width:78px;height:24px;line-height:24px;padding:0 4px;text-align:right;">0</div>
<div class="c bl" style="left:1244px;top:802.5px;width:78px;height:24px;line-height:24px;padding:0 4px;text-align:right;">0</div>
<div class="c bl" style="left:1323px;top:802.5px;width:67px;height:24px;line-height:24px;padding:0 4px;text-align:right;">0</div>
<div class="c bl" style="left:1391px;top:802.5px;width:50px;height:24px;line-height:24px;padding:0 4px;text-align:right;">0</div>
<div class="c bl" style="left:1442px;top:802.5px;width:50px;height:24px;line-height:24px;padding:0 2px;">是</div>
<div class="c bl" style="left:1493px;top:802.5px;width:84px;height:24px;line-height:24px;padding:0 2px;">标准</div>
<div class="c" style="left:473px;top:950.5px;width:205px;height:24px;line-height:24px;padding:0 2px;">1</div>
<div class="c" style="left:909px;top:950.5px;width:79px;height:24px;line-height:24px;padding:0 4px;text-align:right;">条记录</div>
<div class="c" style="left:1165px;top:950.5px;width:78px;height:24px;line-height:24px;padding:0 4px;text-align:right;">0</div>
<div style="left:1810px;top:355px;width:58px;height:44px;border:3px solid #f8393b"></div>
<svg style="left:1460px;top:395px" width="350" height="510" viewBox="1460 395 350 510"><path d="M1474 898.300L1475.300 899.100L1792.800 420.100L1794.400 423.300L1798 405.200L1782.700 415.100L1786.200 415.800Z" fill="#f8393b" stroke="#f8393b" stroke-width="0.800" stroke-linejoin="round"/></svg>
<div style="left:1901px;top:954px;width:8px;height:70px;background:#565c69;border-radius:4px 0 0 0;border-left:1px solid #444a55"></div>
<div style="left:1906px;top:1000px;width:1px;height:21px;background:#7fc0a0"></div>
</body></html>
